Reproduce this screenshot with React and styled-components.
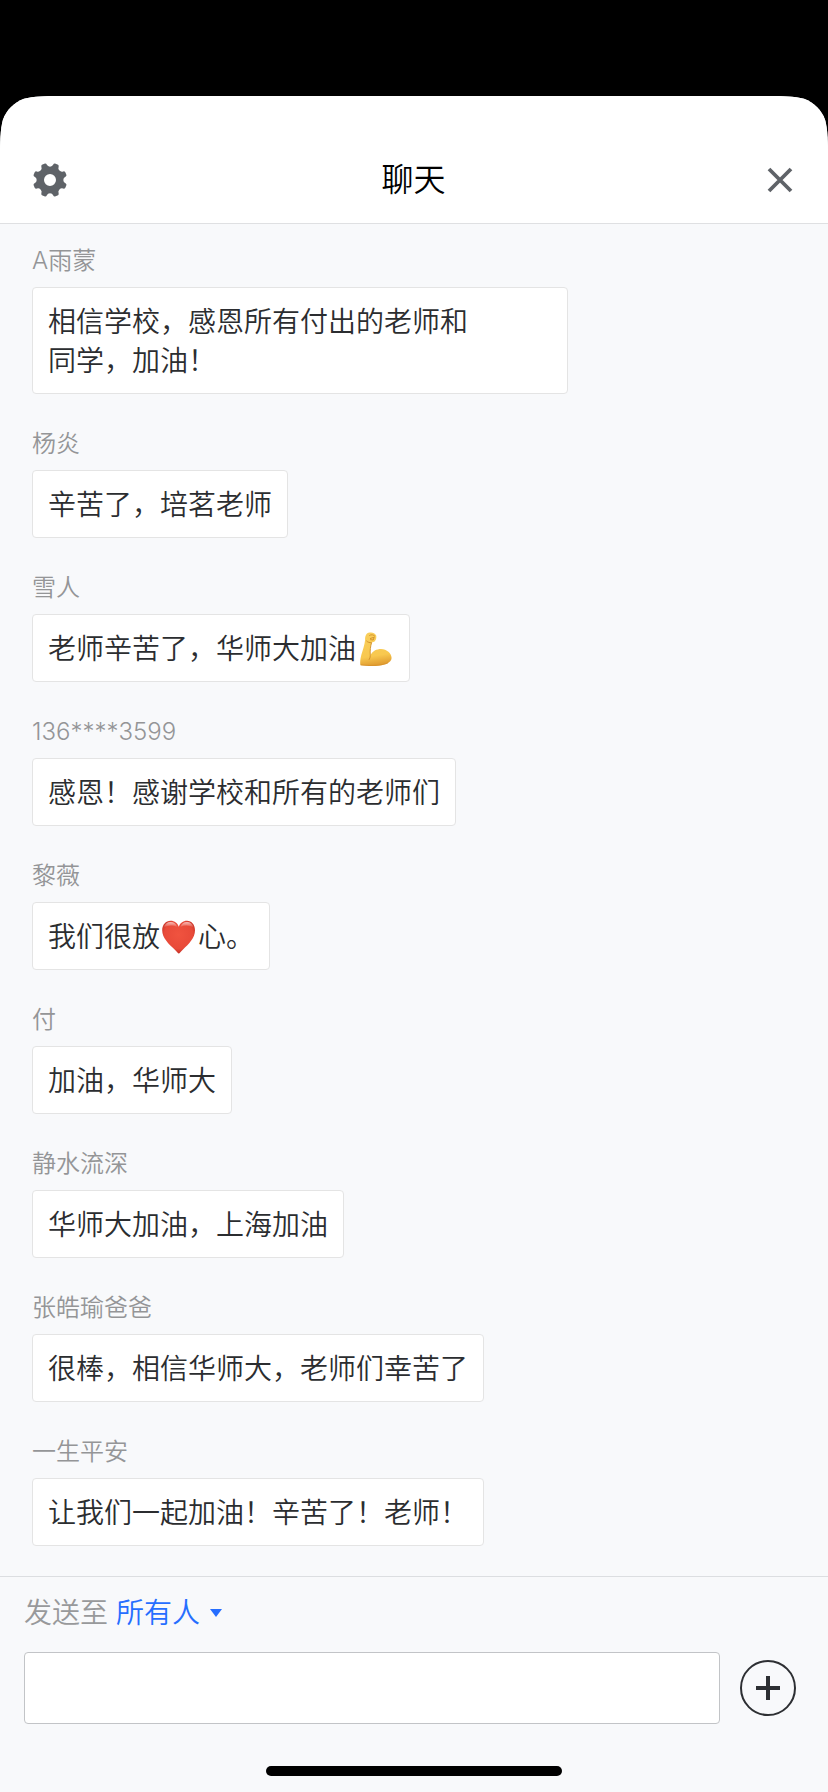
import React from 'react'
import styled, { createGlobalStyle } from 'styled-components'

const messages = [
  { name: 'A雨蒙', text: '相信学校，感恩所有付出的老师和同学，加油！', wide: true },
  { name: '杨炎', text: '辛苦了，培茗老师' },
  { name: '雪人', text: '老师辛苦了，华师大加油', emoji: 'muscle' },
  { name: '136****3599', text: '感恩！感谢学校和所有的老师们' },
  { name: '黎薇', text: '我们很放', emoji: 'heart', rest: '心。' },
  { name: '付', text: '加油，华师大' },
  { name: '静水流深', text: '华师大加油，上海加油' },
  { name: '张皓瑜爸爸', text: '很棒，相信华师大，老师们幸苦了' },
  { name: '一生平安', text: '让我们一起加油！辛苦了！老师！' },
]

// one notch and one tooth, repeated eight times round the hub
const gearPath = () => {
  const at = (deg, r) => {
    const a = (deg * Math.PI) / 180
    return `${(r * Math.cos(a)).toFixed(2)} ${(r * Math.sin(a)).toFixed(2)}`
  }
  let d = `M${at(-12, 15.8)}`
  for (let k = 0; k < 8; k++) {
    const c = k * 45
    d += `A3.6 3.6 0 0 0 ${at(c + 12, 15.8)}`
    d += `Q${at(c + 12.5, 17)} ${at(c + 17, 17.2)}`
    d += `L${at(c + 28, 17.2)}`
    d += `Q${at(c + 32.5, 17)} ${at(c + 33, 15.8)}`
  }
  return d + 'ZM6 0A6 6 0 1 0 -6 0A6 6 0 1 0 6 0Z'
}

const Gear = () => (
  <svg width="36" height="36" viewBox="-18 -18 36 36">
    <path d={gearPath()} fill="#5f6368" fillRule="evenodd" />
  </svg>
)

const Close = () => (
  <svg width="28" height="28" viewBox="-14 -14 28 28">
    <path d="M-11 -11L11 11M11 -11L-11 11" stroke="#5f6368" strokeWidth="3.8" />
  </svg>
)

const Muscle = () => (
  <Emoji viewBox="-1 0 38 38">
    <defs>
      <linearGradient id="skin" x1="0" y1="0" x2="0.15" y2="1">
        <stop offset="0" stopColor="#f9cf5c" />
        <stop offset="0.75" stopColor="#f8c84f" />
        <stop offset="1" stopColor="#e2a033" />
      </linearGradient>
    </defs>
    <path
      d="M9 5C9.6 3.2 11.3 2.2 13.2 2.5C15.6 2.1 18 3.4 19.2 5.5C19.6 7.5 19.2 9.6 18 11C17 12.1 15.6 12.2 14.6 12.6C13.4 16.5 12.9 20.5 13.3 25.5C15.5 21 19.5 19 24 19C29.8 19.2 34.4 23.2 34.6 28C34.4 33 27.5 35.6 18.5 35.9C12.5 36 7 35.8 3.4 35.2C2.9 33 3.2 29 4.3 25C5.8 20 7.6 15 8.1 10C8 7.8 8.2 6.3 9 5Z"
      fill="url(#skin)"
    />
    <path d="M13.3 25.5C13.3 27.2 12.8 28.6 12 29.8M13.3 25.5C12.9 20.5 13.4 16.5 14.6 12.6" fill="none" stroke="#cf8d28" strokeWidth="0.9" />
    <path d="M12.3 5.6C14 4.2 16.8 4.8 18 6.4M13 8.6L17.2 7.2L16.2 10L13.2 9.6M9.4 10.8C10.8 12.3 12.6 12.8 14.6 12.6" fill="none" stroke="#cf8d28" strokeWidth="0.9" />
    <path d="M3.8 34.8C12 36 25 35.6 31 32.9" fill="none" stroke="#d28b27" strokeWidth="0.9" opacity="0.7" />
  </Emoji>
)

const Heart = () => (
  <Emoji viewBox="0 0 38 38">
    <defs>
      <radialGradient id="red" cx="0.5" cy="0.42" r="0.62">
        <stop offset="0" stopColor="#f0533f" />
        <stop offset="0.7" stopColor="#e84a39" />
        <stop offset="1" stopColor="#b92a20" />
      </radialGradient>
      <linearGradient id="shine" x1="0" y1="0" x2="0" y2="1">
        <stop offset="0" stopColor="#fff" stopOpacity="0.65" />
        <stop offset="1" stopColor="#fff" stopOpacity="0" />
      </linearGradient>
    </defs>
    <path
      d="M18.8 35.6C18 35.6 16.8 33.7 14.6 31.5C8.6 25.6 2.2 20 2.2 12.2C2.2 6.8 5.8 2.8 10.6 2.8C14.6 2.8 17.7 5.3 18.8 8.8C19.9 5.3 23 2.8 27 2.8C31.6 2.8 35 6.8 35 12.2C35 20 29 25.6 23 31.5C20.8 33.7 19.6 35.6 18.8 35.6Z"
      fill="url(#red)"
    />
    <path d="M3.8 9.6C4.8 5.8 7.4 3.9 10.6 3.9C13.8 3.9 16.1 5.7 17.2 8.9C13 6.9 8 7 3.8 9.6Z" fill="url(#shine)" />
    <path d="M20.4 8.9C21.5 5.7 23.8 3.9 27 3.9C30.2 3.9 32.6 5.8 33.5 9.6C29.6 7 24.6 6.9 20.4 8.9Z" fill="url(#shine)" />
  </Emoji>
)

const emojis = { muscle: <Muscle />, heart: <Heart /> }

const App = () => {
  return (
    <Screen>
      <GlobalStyle />
      <Sheet>
        <Header>
          <IconBtn aria-label="设置"><Gear /></IconBtn>
          <Title>聊天</Title>
          <IconBtn aria-label="关闭"><Close /></IconBtn>
        </Header>
        <Messages>
          {messages.map((m) => (
            <Message key={m.name}>
              <Name>{m.name}</Name>
              <Bubble $wide={m.wide}>{m.text}{emojis[m.emoji]}{m.rest}</Bubble>
            </Message>
          ))}
        </Messages>
        <Composer>
          <SendTo>
            发送至
            <Target>所有人</Target>
            <Caret />
          </SendTo>
          <InputRow>
            <Input aria-label="消息" />
            <AddBtn aria-label="更多">
              <svg width="24" height="24" viewBox="0 0 24 24">
                <path d="M12 0V24M0 12H24" stroke="#2d2f33" strokeWidth="4" />
              </svg>
            </AddBtn>
          </InputRow>
          <HomeBar />
        </Composer>
      </Sheet>
    </Screen>
  )
}

export default App

const GlobalStyle = createGlobalStyle`
  * {
    box-sizing: border-box;
  }

  body {
    margin: 0;
    background: #000;
    font-family: Inter, 'Noto Sans CJK SC', sans-serif;
    font-weight: 350;
  }
`;

const Screen = styled.div`
  width: 828px;
  height: 1792px;
  padding-top: 96px;
  background: #000;
  overflow: hidden;
`;

const Sheet = styled.div`
  display: flex;
  flex-direction: column;
  height: 1696px;
  background: #f8f9fb;
  clip-path: path('M0 58C0 48 0.3 33 2.85 24C6.4 14.2 14.2 6.4 24 2.85C33 0.3 48 0 58 0H770C780 0 795 0.3 804 2.85C813.8 6.4 821.6 14.2 825.15 24C827.7 33 828 48 828 58V1696H0Z');
`;

const Header = styled.header`
  display: flex;
  align-items: center;
  justify-content: space-between;
  height: 128px;
  padding: 40px 28px 0 30px;
  background: #fff;
  border-bottom: 1px solid #dfe0e2;
`;

const Title = styled.h1`
  margin: 0;
  padding-right: 3px;
  color: #000;
  font-size: 32px;
  font-weight: 350;
  line-height: 46px;
`;

const IconBtn = styled.button`
  display: flex;
  align-items: center;
  justify-content: center;
  width: 40px;
  height: 40px;
  padding: 0;
  border: none;
  background: none;
`;

const Messages = styled.main`
  display: flex;
  flex: 1;
  flex-direction: column;
  gap: 30px;
  padding: 17px 32px 0;
`;

const Message = styled.section`
  display: flex;
  flex-direction: column;
  align-items: flex-start;
  gap: 6px;
`;

const Name = styled.div`
  height: 40px;
  color: #949597;
  font-size: 24px;
  line-height: 40px;
  white-space: nowrap;
`;

const Bubble = styled.div`
  max-width: 536px;
  min-height: 68px;
  padding: 15px ${({ $wide }) => ($wide ? '94px' : '15px')} 12px 15px;
  border: 1px solid #e4e4e4;
  border-radius: 4px;
  background: #fff;
  color: #2b2d30;
  font-size: 28px;
  line-height: 39px;
`;

const Emoji = styled.svg`
  display: inline-block;
  width: 38px;
  height: 38px;
  margin: -6px 0;
  vertical-align: -3px;
`;

const Composer = styled.footer`
  display: flex;
  flex-direction: column;
  height: 216px;
  padding: 15px 32px 0 24px;
  border-top: 1px solid #dcdee1;
`;

const SendTo = styled.div`
  display: flex;
  align-items: center;
  height: 42px;
  color: #98999b;
  font-size: 28px;
  line-height: 42px;
`;

const Target = styled.span`
  margin-left: 8px;
  color: #266eff;
`;

const Caret = styled.i`
  margin-left: 10px;
  border: 6px solid transparent;
  border-top: 8px solid #266eff;
  border-bottom: none;
`;

const InputRow = styled.div`
  display: flex;
  align-items: center;
  justify-content: space-between;
  margin-top: 18px;
`;

const Input = styled.input`
  width: 696px;
  height: 72px;
  padding: 0 16px;
  border: 1px solid #c2c4c7;
  border-radius: 4px;
  background: #fff;
  font-size: 28px;
`;

const AddBtn = styled.button`
  display: flex;
  align-items: center;
  justify-content: center;
  width: 56px;
  height: 56px;
  padding: 0;
  border: 2px solid #2d2f33;
  border-radius: 50%;
  background: none;
`;

const HomeBar = styled.div`
  width: 296px;
  height: 10px;
  margin: 42px 0 0 242px;
  border-radius: 5px;
  background: #000;
`;
